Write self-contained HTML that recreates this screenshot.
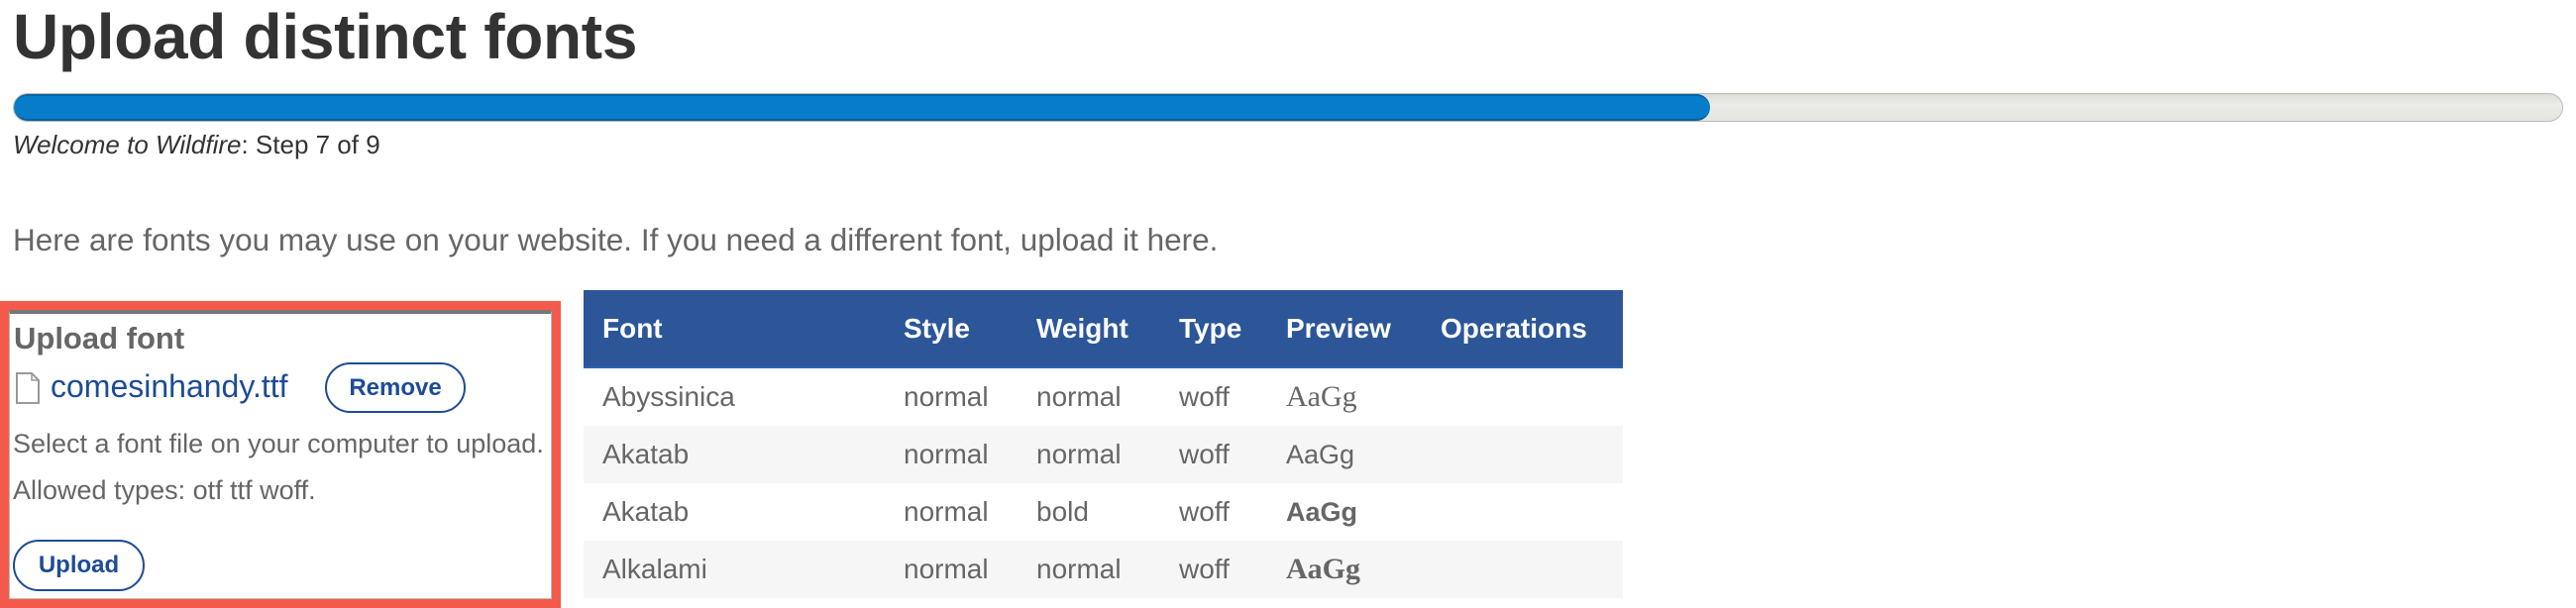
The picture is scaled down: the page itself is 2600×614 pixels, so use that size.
<!DOCTYPE html>
<html><head><meta charset="utf-8"><style>
body{margin:0;width:2600px;height:614px;background:#fff;font-family:"Liberation Sans",sans-serif;color:#555;position:relative;overflow:hidden}
.a{position:absolute;white-space:nowrap}
h1{position:absolute;left:13px;top:0px;margin:0;font-size:64px;font-weight:bold;color:#333;letter-spacing:-0.3px}
.bar{position:absolute;left:13px;top:94px;width:2572px;height:27px;border:1px solid #bbb;border-radius:15px;background:linear-gradient(#dcdcd8,#ecece8 40%,#e4e4e0);overflow:hidden}
.fill{position:absolute;left:0;top:0;width:1712px;height:27px;background:#077dca;border-radius:15px;border-top:2px solid #0a62a0;border-bottom:2px solid #0a5e99;box-sizing:border-box}
.box{position:absolute;left:0;top:304px;width:566px;height:310px;box-sizing:border-box;border:9px solid #f45a4b}
.inner{position:absolute;left:0;top:0;right:0;bottom:0;border:1px solid #bbb;border-top:4px solid #777}
.btn{position:absolute;border:2px solid #1d4b97;border-radius:26px;color:#1d4b97;font-weight:bold;font-size:24px;text-align:center;box-sizing:border-box;background:#fff}
table{position:absolute;left:589px;top:293px;width:1049px;border-collapse:collapse;font-size:28px}
th{background:#2c5698;color:#fff;text-align:left;height:77px;padding:0 0 0 19px;font-size:28px;border-bottom:2px solid #2a63b8}
td{height:58px;padding:0 0 0 19px;color:#666}
tr.g td{background:#f6f6f6}
td.p{font-family:"Liberation Serif",serif;font-size:30px}
</style></head><body>
<h1>Upload distinct fonts</h1>
<div class="bar"><div class="fill"></div></div>
<div class="a" style="left:13px;top:131px;font-size:26px;color:#333"><i>Welcome to Wildfire</i>: Step 7 of 9</div>
<div class="a" style="left:13px;top:224px;font-size:31.5px;color:#666">Here are fonts you may use on your website. If you need a different font, upload it here.</div>
<div class="box"><div class="inner"></div></div>
<div class="a" style="left:14px;top:324px;font-size:31px;font-weight:bold;color:#666">Upload font</div>
<svg class="a" style="left:16px;top:376px" width="24" height="32" viewBox="0 0 24 32"><path d="M1 1H16L23 8V31H1Z" fill="#fff" stroke="#999" stroke-width="2"/><path d="M16 1V8H23" fill="none" stroke="#999" stroke-width="1.5"/></svg>
<div class="a" style="left:51px;top:372px;font-size:32px;color:#1d4b97">comesinhandy.ttf</div>
<div class="btn" style="left:328px;top:366px;width:142px;height:51px;line-height:47px">Remove</div>
<div class="a" style="left:13px;top:433px;font-size:27px;color:#666">Select a font file on your computer to upload.</div>
<div class="a" style="left:13px;top:480px;font-size:27px;color:#666">Allowed types: otf ttf woff.</div>
<div class="btn" style="left:13px;top:545px;width:133px;height:52px;line-height:48px">Upload</div>
<table>
<tr><th style="width:285px">Font</th><th style="width:115px">Style</th><th style="width:125px">Weight</th><th style="width:89px">Type</th><th style="width:137px">Preview</th><th>Operations</th></tr>
<tr><td>Abyssinica</td><td>normal</td><td>normal</td><td>woff</td><td class="p">AaGg</td><td></td></tr>
<tr class="g"><td>Akatab</td><td>normal</td><td>normal</td><td>woff</td><td class="p" style="font-family:'Liberation Sans',sans-serif;font-size:27px">AaGg</td><td></td></tr>
<tr><td>Akatab</td><td>normal</td><td>bold</td><td>woff</td><td class="p" style="font-family:'Liberation Sans',sans-serif;font-weight:bold;font-size:27px">AaGg</td><td></td></tr>
<tr class="g"><td>Alkalami</td><td>normal</td><td>normal</td><td>woff</td><td class="p" style="font-weight:bold">AaGg</td><td></td></tr>
</table>
</body></html>
